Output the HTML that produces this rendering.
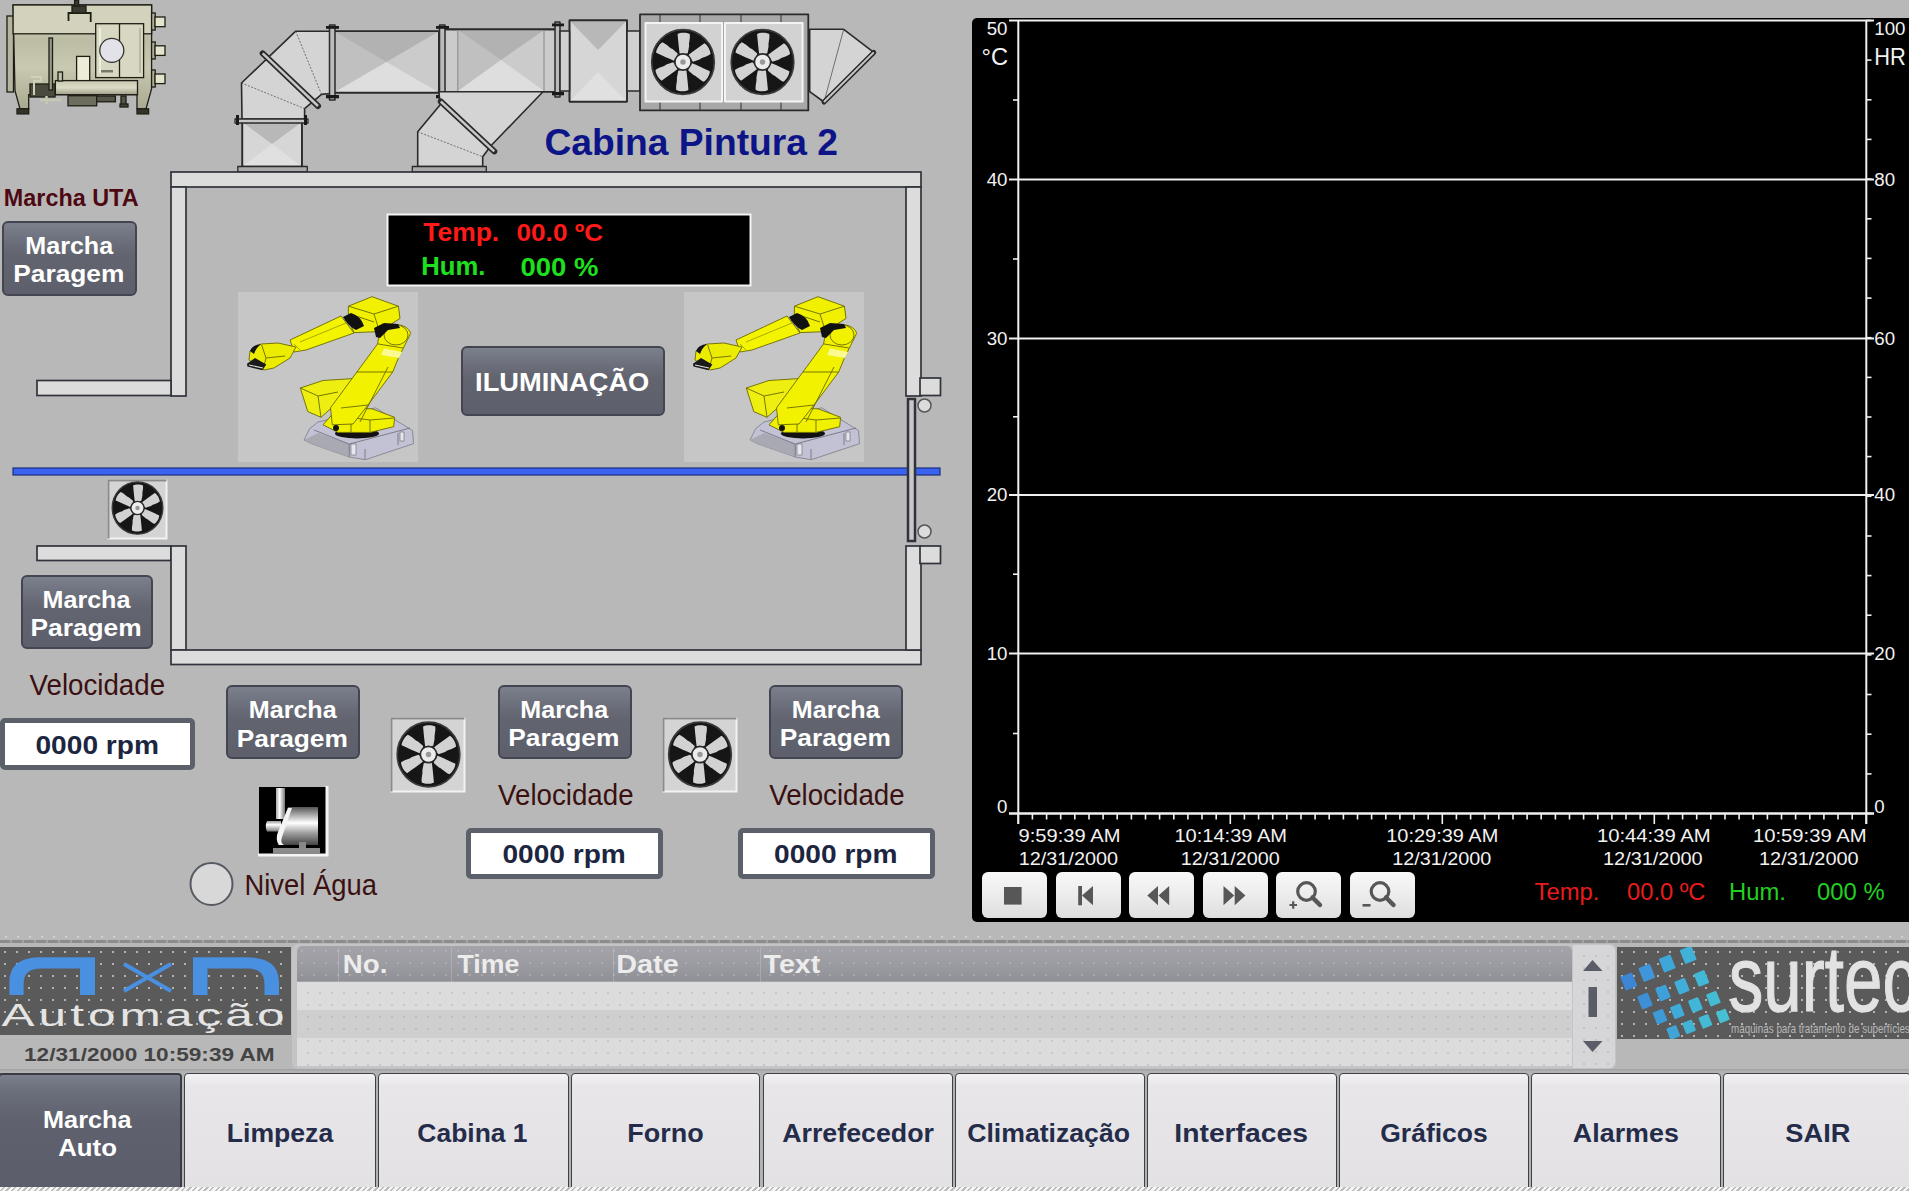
<!DOCTYPE html><html><head><meta charset="utf-8"><style>*{margin:0;padding:0;box-sizing:border-box}
html,body{width:1909px;height:1191px;overflow:hidden;background:#b8b8b8;font-family:"Liberation Sans",sans-serif}
.a{position:absolute}
.btn{position:absolute;border:2px solid #434651;border-radius:6px;background:linear-gradient(#7c7f8c 0%,#6e717e 22%,#62656f 45%,#5d606c 100%)}
.rpm{position:absolute;border:5px solid #5c606a;border-radius:5px;background:#fff}
.cbtn{position:absolute;top:872px;width:65px;height:46px;border-radius:6px;background:linear-gradient(#f8f8f8,#ececec 50%,#dedede)}
.nav{position:absolute;top:1072.5px;height:118px;border:1.5px solid #3f4147;border-radius:4px;background:linear-gradient(#f4f2f4 0%,#e8e6e8 10%,#e3e1e3 100%)}
.dots{background-image:radial-gradient(circle,rgba(210,210,210,.75) 0.7px,transparent 1.3px);background-size:12px 12px;background-position:-1px -1px}
.dotsl{background-image:radial-gradient(circle,rgba(160,160,165,.35) 0.7px,transparent 1.3px);background-size:12px 12px;background-position:5px 5px}
</style></head><body>
<!-- DUCTS + UTA -->
<svg class="a" style="left:0;top:0" width="900" height="180">
 <defs>
  <linearGradient id="xg1" x1="0" y1="0" x2="0" y2="1"><stop offset="0" stop-color="#bcbcbc"/><stop offset="1" stop-color="#d8d8d8"/></linearGradient>
 </defs>
 <g stroke="#2a2a2a" stroke-width="1.6" stroke-linejoin="round">
  <!-- left elbow -->
  <path d="M242 119 L241.5 83 L295.7 31.2 L330.4 31.2 L330.4 93.5 L321.5 94.4 L304.6 108.6 L304.6 119 Z" fill="#d4d4d4"/>
  <path d="M241.5 83 L304.6 108.6 M295.7 31.2 L321.5 94.4" stroke="#555" stroke-width="0.8" stroke-dasharray="2 1.5" fill="none"/>
  <!-- lower square duct -->
  <rect x="242.3" y="122" width="59.6" height="44.5" fill="#d6d6d6"/>
  <path d="M242.3 122 L272 144 L301.9 122 Z" fill="#b8b8b8" stroke="none"/>
  <path d="M242.3 166.5 L272 144 L301.9 166.5 Z" fill="#e0e0e0" stroke="none"/>
  <rect x="242.3" y="122" width="59.6" height="44.5" fill="none"/>
  <rect x="235" y="119" width="73" height="4" fill="#c8c8c8" stroke-width="1.3"/>
  <rect x="237.8" y="166.5" width="69.5" height="5.5" fill="#aaa" stroke-width="1.3"/>
  <!-- diagonal flange -->
  <path d="M262.7 53.4 L318 106" stroke="#2a2a2a" stroke-width="6" stroke-linecap="round"/>
  <path d="M262.7 53.4 L318 106" stroke="#c8c8c8" stroke-width="2.5"/>
  <!-- straight duct 1 -->
  <rect x="334" y="31.2" width="105" height="61.4" fill="#cbcbcb"/>
  <path d="M334 31.2 L386.5 62 L334 92.6 Z" fill="#c0c0c0" stroke="none"/>
  <path d="M334 31.2 L386.5 62 L439 31.2 Z" fill="#b2b2b2" stroke="none"/>
  <path d="M334 92.6 L386.5 62 L439 92.6 Z" fill="#dedede" stroke="none"/>
  <rect x="334" y="31.2" width="105" height="61.4" fill="none"/>
  <rect x="329.5" y="25" width="5.5" height="75" fill="#bbb" stroke-width="1.5"/>
  <!-- duct 2 -->
  <rect x="444" y="29.4" width="112.6" height="62.3" fill="#cbcbcb"/>
  <path d="M458 30 L501 60 L458 91 Z" fill="#c0c0c0" stroke="none"/>
  <path d="M458 30 L501 60 L544 30 Z" fill="#b2b2b2" stroke="none"/>
  <path d="M458 91 L501 60 L544 91 Z" fill="#dedede" stroke="none"/>
  <rect x="444" y="29.4" width="112.6" height="62.3" fill="none"/>
  <path d="M457.8 30 V91 M544 30 V91" stroke="#888" stroke-width="1" fill="none"/>
  <rect x="439.5" y="25" width="5.5" height="75" fill="#bbb" stroke-width="1.5"/>
  <rect x="555" y="22" width="5" height="75" fill="#bbb" stroke-width="1.5"/>
  <g fill="#1a1a1a" stroke="none">
   <rect x="326" y="26" width="13" height="2.8"/><rect x="326" y="95" width="13" height="3.3"/>
   <rect x="436" y="26" width="13" height="2.8"/><rect x="436" y="95" width="13" height="3.3"/>
   <rect x="552" y="23.5" width="12" height="2.8"/><rect x="552" y="92" width="12" height="3.3"/>
   <rect x="236" y="115" width="3" height="10"/><rect x="304" y="115" width="3" height="10"/>
  </g>
  <!-- right elbow (down) -->
  <path d="M439 91.7 L543 91.7 L490.7 146 L482.7 156.7 L482.7 166.5 L417.7 166.5 L417.7 131.8 L440 105 Z" fill="#d4d4d4"/>
  <path d="M417.7 131.8 L482.7 156.7" stroke="#555" stroke-width="0.8" stroke-dasharray="2 1.5" fill="none"/>
  <path d="M440.8 101.5 L494.3 151.4" stroke="#2a2a2a" stroke-width="6" stroke-linecap="round"/>
  <path d="M440.8 101.5 L494.3 151.4" stroke="#c8c8c8" stroke-width="2.5"/>
  <rect x="412.3" y="166.5" width="74" height="5.5" fill="#aaa" stroke-width="1.3"/>
  <!-- filter box -->
  <rect x="569.5" y="20.4" width="57.5" height="81.2" fill="#d6d6d6"/>
  <path d="M570 21 L598 50 L626.5 21 Z" fill="#b8b8b8" stroke="none"/>
  <path d="M570 101 L598 72 L626.5 101 Z" fill="#e0e0e0" stroke="none"/>
  <rect x="569.5" y="20.4" width="57.5" height="81.2" fill="none"/>
  <rect x="560" y="31" width="9.5" height="60" fill="#d0d0d0"/>
  <rect x="627" y="31" width="13" height="60" fill="#d0d0d0"/>
  <!-- fan box -->
  <rect x="640" y="14.4" width="168.3" height="96" fill="#a8a8a8" stroke-width="1.8"/>
  <path d="M660 14.4 V24 M700 14.4 V24 M741 14.4 V24 M781 14.4 V24 M660 101 V110.4 M700 101 V110.4 M741 101 V110.4 M781 101 V110.4" stroke="#333" stroke-width="1"/>
  <rect x="645.5" y="23" width="76.5" height="78.6" fill="#d2d2d2" stroke="#f4f4f4" stroke-width="2"/>
  <rect x="725" y="23" width="77.6" height="78.6" fill="#d2d2d2" stroke="#f4f4f4" stroke-width="2"/>
  <!-- exit duct -->
  <path d="M809.7 29.3 L843.7 29.3 L873.8 52.4 L824 102 L809.7 91.7 Z" fill="#d4d4d4"/>
  <path d="M843.7 29.3 L824 102" stroke="#555" stroke-width="0.8" fill="none"/>
  <path d="M873.8 52.4 L824 102" stroke="#2a2a2a" stroke-width="5" stroke-linecap="round"/>
  <path d="M873.8 52.4 L824 102" stroke="#c8c8c8" stroke-width="2"/>
 </g>
 <use href="#fan" x="649" y="27.5" width="68" height="69"/>
 <use href="#fan" x="728.5" y="27.5" width="68" height="69"/>

 <!-- UTA machine -->
 <defs>
  <linearGradient id="utab" x1="0" y1="0" x2="0" y2="1"><stop offset="0" stop-color="#cfcfb8"/><stop offset=".35" stop-color="#bdbda6"/><stop offset=".6" stop-color="#c9c9b2"/><stop offset="1" stop-color="#a9a992"/></linearGradient>
  <linearGradient id="utat" x1="0" y1="0" x2="0" y2="1"><stop offset="0" stop-color="#c8c8b0"/><stop offset=".5" stop-color="#dcdcc6"/><stop offset="1" stop-color="#9e9e88"/></linearGradient>
 </defs>
 <g stroke="#1e1e14" stroke-width="1.3">
  <rect x="7" y="16" width="6.5" height="76" fill="#b4b4a0"/>
  <path d="M13.1 5 H151.6 V88.7 L146 108.8 H137 V94.7 H28.7 V108.8 H20 L15 90.7 Z" fill="url(#utab)"/>
  <rect x="13.1" y="5" width="138.5" height="28.8" fill="#d3d3bd"/>
  <rect x="95.7" y="23.7" width="47.9" height="53.9" fill="#d8d8c2"/>
  <path d="M119.5 24 V77.6" fill="none"/>
  <path d="M100 28 V73" stroke="#f4f4e4" stroke-width="1.6" fill="none"/>
  <path d="M140 28 V73" stroke="#9a9a86" stroke-width="1" fill="none"/>
  <rect x="101" y="70" width="12" height="2.5" fill="#77776a" stroke="none"/>
  <circle cx="111.8" cy="50.4" r="12" fill="#e2e2e8" stroke="#333"/>
  <rect x="76.6" y="56.4" width="13.1" height="25.2" fill="#ececd8"/>
  <rect x="55.4" y="80.6" width="82.1" height="14.1" fill="url(#utat)"/>
  <rect x="68" y="95.7" width="28.7" height="10.1" fill="#6e6e5e"/>
  <rect x="96.7" y="96" width="18.7" height="5.8" fill="#55554a"/>
  <rect x="30" y="84" width="25" height="13" fill="#4a4a3e"/>
  <path d="M31 77 H41 V81 H34 V95" stroke="#d0d0ba" stroke-width="2" fill="none"/>
  <path d="M40 100 H61 M46.5 96 V104" stroke="#c8c8b2" stroke-width="2.5" fill="none"/>
  <rect x="58" y="72" width="4.5" height="9" fill="#c4c4ae"/>
  <rect x="121" y="96" width="5" height="9" fill="#55554a"/>
  <rect x="120" y="104" width="8" height="3" fill="#44443a"/>
  <rect x="17" y="108.8" width="11.7" height="5.1" fill="#33332a"/>
  <rect x="137" y="108.8" width="11.6" height="5.1" fill="#33332a"/>
  <rect x="49" y="38" width="3.5" height="52" fill="#9a9a88"/>
  <path d="M68.5 21 V13 H90.7 V22" fill="none" stroke-width="1.8"/>
  <rect x="72" y="6" width="14" height="7" fill="#3a3a30"/>
  <rect x="74.6" y="0" width="4" height="6" fill="#3a3a30"/>
  <rect x="151.6" y="13" width="3.6" height="17" fill="#b0b09a"/>
  <rect x="155" y="17" width="10" height="9.7" fill="#e4e4cc"/>
  <rect x="151.6" y="42" width="3.6" height="17" fill="#b0b09a"/>
  <rect x="155" y="45.8" width="10" height="9.6" fill="#e4e4cc"/>
  <rect x="151.6" y="70" width="3.6" height="17" fill="#b0b09a"/>
  <rect x="155" y="74" width="10" height="9.6" fill="#e4e4cc"/>
 </g>
</svg>

<!-- LEFT SCENE -->
<svg class="a" style="left:0;top:0" width="970" height="940" font-family="Liberation Sans">
 <defs>
  <symbol id="fan" viewBox="0 0 100 100">
   <ellipse cx="50" cy="50" rx="46" ry="47.5" fill="#161616" stroke="#3a3a3a" stroke-width="2.5"/>
   <g fill="#d2d2d2">
    <path id="bl" d="M42 9 C46 6.5 55 6.5 60 9 C61 16 58 22 59 27 L57 37 C53 38.5 48 38.5 45 37.5 C44 30 43 20 42 9 Z"/>
    <use href="#bl" transform="rotate(60 50 50)"/>
    <use href="#bl" transform="rotate(120 50 50)"/>
    <use href="#bl" transform="rotate(180 50 50)"/>
    <use href="#bl" transform="rotate(240 50 50)"/>
    <use href="#bl" transform="rotate(300 50 50)"/>
   </g>
   <circle cx="50" cy="50" r="12" fill="#ececec" stroke="#2a2a2a" stroke-width="2.5"/>
   <circle cx="50" cy="50" r="4" fill="#999"/>
  </symbol>
  <linearGradient id="duct" x1="0" y1="0" x2="0" y2="1"><stop offset="0" stop-color="#d0d0d0"/><stop offset="1" stop-color="#d8d8d8"/></linearGradient>
 </defs>

 <!-- blue line -->
 <rect x="13" y="468" width="927" height="7" fill="#3a64f0" stroke="#1c2c80" stroke-width="1.2"/>
 <!-- frame -->
 <g fill="#dcdcdc" stroke="#30333b" stroke-width="1.7">
  <rect x="171" y="172" width="750" height="15"/>
  <rect x="171" y="187" width="15" height="209"/>
  <rect x="37" y="380.5" width="134" height="15"/>
  <rect x="906" y="187" width="15" height="209"/>
  <rect x="37" y="546" width="134" height="14.5"/>
  <rect x="171" y="546" width="15" height="104"/>
  <rect x="171" y="650" width="750" height="14.5"/>
  <rect x="906" y="546" width="15" height="104"/>
  <rect x="920" y="378" width="20.5" height="17.5"/>
  <rect x="920" y="546" width="20.5" height="17.5"/>
  <rect x="908" y="399" width="7" height="142" stroke-width="2.5" fill="#c8c8c8"/>
  <circle cx="924.5" cy="405.5" r="6.5" stroke="#555" stroke-width="1.5"/>
  <circle cx="924.5" cy="531.5" r="6.5" stroke="#555" stroke-width="1.5"/>
 </g>

 <!-- Temp hum box -->
 <rect x="387.5" y="214.5" width="363" height="71" fill="#000" stroke="#f4f4f4" stroke-width="2"/>

 <!-- Titles -->
 <circle cx="211.5" cy="884" r="21" fill="#d8d8d8" stroke="#555a62" stroke-width="2"/>

 <!-- small fans -->
 <g>
  <rect x="108.5" y="480.5" width="58" height="58" fill="#d4d4d4" stroke="#f2f2f2" stroke-width="2"/>
  <path d="M108.5 538.5 V480.5 H166.5" fill="none" stroke="#8a8a8a" stroke-width="2"/>
  <use href="#fan" x="110" y="480" width="55" height="56"/>
 </g>
 <g>
  <rect x="391.5" y="718.5" width="73" height="73" fill="#d4d4d4" stroke="#f2f2f2" stroke-width="2"/>
  <path d="M391.5 791.5 V718.5 H464.5" fill="none" stroke="#8a8a8a" stroke-width="2"/>
  <use href="#fan" x="394.5" y="719.5" width="68" height="70"/>
 </g>
 <g>
  <rect x="663.5" y="718.5" width="73" height="73" fill="#d4d4d4" stroke="#f2f2f2" stroke-width="2"/>
  <path d="M663.5 791.5 V718.5 H736.5" fill="none" stroke="#8a8a8a" stroke-width="2"/>
  <use href="#fan" x="666" y="719.5" width="68" height="70"/>
 </g>

 <!-- motor -->
 <g transform="translate(259,787)">
  <rect x="0" y="0" width="67" height="67" fill="#000"/>
  <path d="M-1 68 H68 V-1" fill="none" stroke="#f4f4f4" stroke-width="3"/>
  <defs>
   <linearGradient id="mg" x1="0" y1="0" x2="0" y2="1"><stop offset="0" stop-color="#555"/><stop offset=".25" stop-color="#bbb"/><stop offset=".42" stop-color="#fff"/><stop offset=".7" stop-color="#999"/><stop offset="1" stop-color="#444"/></linearGradient>
   <linearGradient id="sg" x1="0" y1="0" x2="1" y2="0"><stop offset="0" stop-color="#aaa"/><stop offset=".4" stop-color="#fff"/><stop offset="1" stop-color="#777"/></linearGradient>
  </defs>
  <rect x="17" y="1" width="9" height="31" fill="url(#sg)"/>
  <linearGradient id="stg" x1="0" y1="0" x2="0" y2="1"><stop offset="0" stop-color="#999"/><stop offset=".35" stop-color="#fff"/><stop offset="1" stop-color="#777"/></linearGradient><path d="M8 34 H22 V44.6 H8 Q5.5 39.3 8 34 Z" fill="url(#stg)"/>
  <path d="M29 20 H59 V58 H29 L19 58 Q17 50 21 44 Z" fill="url(#mg)"/><path d="M29 21 L33 21 L23 50 Q21 56 25 58 L20 58 Q16 52 19 45 Z" fill="#f4f4f4"/>
  <rect x="40" y="55" width="7" height="7" fill="#888"/>
  <rect x="14" y="61" width="47" height="6" fill="#8a8a8a"/>
 </g>
</svg>


<div class="btn" style="left:2px;top:221px;width:135px;height:74.5px"></div>
<div class="btn" style="left:20.5px;top:575px;width:132.5px;height:74px"></div>
<div class="btn" style="left:226px;top:685.4px;width:134px;height:73.5px"></div>
<div class="btn" style="left:497.5px;top:685px;width:134px;height:74px"></div>
<div class="btn" style="left:769px;top:685px;width:134px;height:74px"></div>
<div class="btn" style="left:461.3px;top:345.5px;width:203.3px;height:70.4px"></div>
<div class="rpm" style="left:0px;top:717.8px;width:195px;height:52.2px"></div>
<div class="rpm" style="left:465.8px;top:827.6px;width:197.2px;height:51.1px"></div>
<div class="rpm" style="left:737.6px;top:827.6px;width:197px;height:51.1px"></div>
<!-- ROBOTS -->
<svg width="0" height="0" style="position:absolute">
 <defs>
  <symbol id="robot" viewBox="0 0 180 170">
   <rect x="0" y="0" width="180" height="170" fill="#c6c6c6"/>
   <!-- base -->
   <path d="M66 148 L71.7 136.6 L80 130 L137.7 115.8 L174.5 138.5 L175.5 151.7 L127.4 167.7 L111.3 165 L73.6 151.7 Z" fill="#c2c2d4" stroke="#7a7a88" stroke-width="0.8"/>
   <path d="M66 148 L73.6 151.7 L111.3 165 L111.3 152 L80 141 Z" fill="#a9a9b4" stroke="none"/>
   <path d="M111.3 152 L172 136 M111.3 152 V165 M127 157 V167 M160 141 V153 M76 138 L111 152" stroke="#6a6a78" stroke-width="0.8" fill="none"/>
   <rect x="113" y="152" width="5" height="11" fill="#e6e6f0" stroke="#666" stroke-width=".6"/>
   <rect x="162" y="140" width="4" height="9" fill="#e6e6f0" stroke="#666" stroke-width=".6"/>
   <ellipse cx="119" cy="141.5" rx="22" ry="5" fill="#111"/>
   <g stroke="#6a6a00" stroke-width="0.9" stroke-linejoin="round">
    <!-- counterweight box -->
    <path d="M62.3 96 L85 88.5 L115 86.6 L100 110 L83 125.3 L69.8 119.6 Z" fill="#eeee10"/>
    <path d="M62.3 96 L80 104 L100 100 M80 104 L83 125.3" fill="none"/>
    <!-- turret -->
    <path d="M85 132.8 L100 116 L134 116.8 L156.6 125.3 L155.7 134.7 L132 140.4 L100 140.4 Z" fill="#f0f000"/>
    <path d="M100 124 L132 128 L156 126 M113 128 V140 M132 128 V140" fill="none"/>
    <!-- upper arm -->
    <path d="M94.3 132.8 L92.5 115.8 L118.9 80 L139.6 51.9 L142 38 C146 30 170 30 172.6 41.5 L160.4 66 L154.7 80 L130 113 L115 132 Z" fill="#f2f200"/>
    <path d="M118.9 80 L154.7 80 M139.6 51.9 L165 56 M130 113 L103 116 M122 130 L150 75" fill="none"/>
    <path d="M146 56.6 L164 60 L161 66 L143 63 Z" fill="#fafa90" stroke="none"/>
    <ellipse cx="158" cy="43" rx="12" ry="10" fill="none"/>
    <!-- top box -->
    <path d="M110.4 14.2 L134 4.7 L160.4 14.2 L162 26.4 L141.5 39.6 L116 40.6 L110.4 28.3 Z" fill="#f0f000"/>
    <path d="M110.4 14.2 L136 22 L160.4 14.2 M136 22 L141.5 39.6 M118 24 L136 30" fill="none"/>
    <path d="M136 36 L146 31 L160 32 L162 36 L150 38 L142 46 L138 45 Z" fill="#111" stroke="none"/>
    <!-- forearm -->
    <path d="M52 48 L103 24 L116 41 L68 58 L56 60 Z" fill="#f4f400"/>
    <path d="M62 50 L108 31 M56 52 L62 58" fill="none" stroke="#a0a000"/>
    <path d="M105 25 L113 21 Q123 24 126 34 L118 38 Q110 34 105 25 Z" fill="#111" stroke="none"/>
    <!-- wrist -->
    <path d="M12 59 L23 52 L40 51 L58 55 L52 66 L36 76 L26 78 L11 68 Z" fill="#ecec00"/>
    <path d="M23.6 52.8 L28 66 L47.2 64 M28 66 L25.5 75.5" fill="none"/>
    <path d="M12 59 Q14 53 23 52 Q18 56 16 62 Z" fill="#151515" stroke="none"/>
    <!-- tool -->
    <path d="M9 71.7 L17 66 L28.3 72.6 L24.5 78.3 L9.4 74.5 Z" fill="#1a1a1a" stroke="none"/>
    <path d="M11 73 L25 76" stroke="#dddddd" stroke-width="1.2"/>
    <circle cx="98" cy="136" r="3" fill="#111" stroke="none"/>
   </g>
  </symbol>
 </defs>
</svg>
<svg class="a" style="left:238px;top:292px" width="180" height="170"><use href="#robot" width="180" height="170"/></svg>
<svg class="a" style="left:684px;top:292px" width="180" height="170"><use href="#robot" width="180" height="170"/></svg>
<div class="a" style="left:972px;top:18px;width:937px;height:904px;background:#000;border-radius:5px 0 0 5px"></div>
<div class="cbtn" style="left:982px"></div>
<div class="cbtn" style="left:1055.5px"></div>
<div class="cbtn" style="left:1129px"></div>
<div class="cbtn" style="left:1202.6px"></div>
<div class="cbtn" style="left:1276px"></div>
<div class="cbtn" style="left:1350px"></div>
<svg class="a" style="left:0;top:0" width="1909" height="930">
<g stroke="#f0f0f0" fill="none">
<line x1="1009" y1="20.5" x2="1874" y2="20.5" stroke-width="2"/>
<line x1="1009" y1="179.5" x2="1874" y2="179.5" stroke-width="2"/>
<line x1="1009" y1="338.5" x2="1874" y2="338.5" stroke-width="2"/>
<line x1="1009" y1="495" x2="1874" y2="495" stroke-width="2"/>
<line x1="1009" y1="653.5" x2="1874" y2="653.5" stroke-width="2"/>
<line x1="1009" y1="813.5" x2="1874" y2="813.5" stroke-width="2.6"/>
<line x1="1018.3" y1="20" x2="1018.3" y2="824" stroke-width="2"/>
<line x1="1866.3" y1="20" x2="1866.3" y2="824" stroke-width="2"/>
<line x1="1013" y1="100.0" x2="1018" y2="100.0" stroke-width="1.6"/>
<line x1="1013" y1="259.0" x2="1018" y2="259.0" stroke-width="1.6"/>
<line x1="1013" y1="416.8" x2="1018" y2="416.8" stroke-width="1.6"/>
<line x1="1013" y1="574.2" x2="1018" y2="574.2" stroke-width="1.6"/>
<line x1="1013" y1="733.5" x2="1018" y2="733.5" stroke-width="1.6"/>
<line x1="1866" y1="20.5" x2="1871.5" y2="20.5" stroke-width="1.6"/>
<line x1="1866" y1="60.1" x2="1871.5" y2="60.1" stroke-width="1.6"/>
<line x1="1866" y1="99.8" x2="1871.5" y2="99.8" stroke-width="1.6"/>
<line x1="1866" y1="139.4" x2="1871.5" y2="139.4" stroke-width="1.6"/>
<line x1="1866" y1="179.1" x2="1871.5" y2="179.1" stroke-width="1.6"/>
<line x1="1866" y1="218.8" x2="1871.5" y2="218.8" stroke-width="1.6"/>
<line x1="1866" y1="258.4" x2="1871.5" y2="258.4" stroke-width="1.6"/>
<line x1="1866" y1="298.1" x2="1871.5" y2="298.1" stroke-width="1.6"/>
<line x1="1866" y1="337.7" x2="1871.5" y2="337.7" stroke-width="1.6"/>
<line x1="1866" y1="377.4" x2="1871.5" y2="377.4" stroke-width="1.6"/>
<line x1="1866" y1="417.0" x2="1871.5" y2="417.0" stroke-width="1.6"/>
<line x1="1866" y1="456.6" x2="1871.5" y2="456.6" stroke-width="1.6"/>
<line x1="1866" y1="496.3" x2="1871.5" y2="496.3" stroke-width="1.6"/>
<line x1="1866" y1="536.0" x2="1871.5" y2="536.0" stroke-width="1.6"/>
<line x1="1866" y1="575.6" x2="1871.5" y2="575.6" stroke-width="1.6"/>
<line x1="1866" y1="615.2" x2="1871.5" y2="615.2" stroke-width="1.6"/>
<line x1="1866" y1="654.9" x2="1871.5" y2="654.9" stroke-width="1.6"/>
<line x1="1866" y1="694.5" x2="1871.5" y2="694.5" stroke-width="1.6"/>
<line x1="1866" y1="734.2" x2="1871.5" y2="734.2" stroke-width="1.6"/>
<line x1="1866" y1="773.9" x2="1871.5" y2="773.9" stroke-width="1.6"/>
<line x1="1866" y1="813.5" x2="1871.5" y2="813.5" stroke-width="1.6"/>
<line x1="1018.3" y1="813" x2="1018.3" y2="824" stroke-width="1.6"/>
<line x1="1032.4" y1="813" x2="1032.4" y2="819.5" stroke-width="1.6"/>
<line x1="1046.6" y1="813" x2="1046.6" y2="819.5" stroke-width="1.6"/>
<line x1="1060.7" y1="813" x2="1060.7" y2="819.5" stroke-width="1.6"/>
<line x1="1074.8" y1="813" x2="1074.8" y2="819.5" stroke-width="1.6"/>
<line x1="1089.0" y1="813" x2="1089.0" y2="819.5" stroke-width="1.6"/>
<line x1="1103.1" y1="813" x2="1103.1" y2="819.5" stroke-width="1.6"/>
<line x1="1117.2" y1="813" x2="1117.2" y2="819.5" stroke-width="1.6"/>
<line x1="1131.4" y1="813" x2="1131.4" y2="819.5" stroke-width="1.6"/>
<line x1="1145.5" y1="813" x2="1145.5" y2="819.5" stroke-width="1.6"/>
<line x1="1159.6" y1="813" x2="1159.6" y2="819.5" stroke-width="1.6"/>
<line x1="1173.8" y1="813" x2="1173.8" y2="819.5" stroke-width="1.6"/>
<line x1="1187.9" y1="813" x2="1187.9" y2="819.5" stroke-width="1.6"/>
<line x1="1202.0" y1="813" x2="1202.0" y2="819.5" stroke-width="1.6"/>
<line x1="1216.2" y1="813" x2="1216.2" y2="819.5" stroke-width="1.6"/>
<line x1="1230.3" y1="813" x2="1230.3" y2="824" stroke-width="1.6"/>
<line x1="1244.4" y1="813" x2="1244.4" y2="819.5" stroke-width="1.6"/>
<line x1="1258.6" y1="813" x2="1258.6" y2="819.5" stroke-width="1.6"/>
<line x1="1272.7" y1="813" x2="1272.7" y2="819.5" stroke-width="1.6"/>
<line x1="1286.8" y1="813" x2="1286.8" y2="819.5" stroke-width="1.6"/>
<line x1="1301.0" y1="813" x2="1301.0" y2="819.5" stroke-width="1.6"/>
<line x1="1315.1" y1="813" x2="1315.1" y2="819.5" stroke-width="1.6"/>
<line x1="1329.2" y1="813" x2="1329.2" y2="819.5" stroke-width="1.6"/>
<line x1="1343.4" y1="813" x2="1343.4" y2="819.5" stroke-width="1.6"/>
<line x1="1357.5" y1="813" x2="1357.5" y2="819.5" stroke-width="1.6"/>
<line x1="1371.6" y1="813" x2="1371.6" y2="819.5" stroke-width="1.6"/>
<line x1="1385.8" y1="813" x2="1385.8" y2="819.5" stroke-width="1.6"/>
<line x1="1399.9" y1="813" x2="1399.9" y2="819.5" stroke-width="1.6"/>
<line x1="1414.0" y1="813" x2="1414.0" y2="819.5" stroke-width="1.6"/>
<line x1="1428.2" y1="813" x2="1428.2" y2="819.5" stroke-width="1.6"/>
<line x1="1442.3" y1="813" x2="1442.3" y2="824" stroke-width="1.6"/>
<line x1="1456.4" y1="813" x2="1456.4" y2="819.5" stroke-width="1.6"/>
<line x1="1470.6" y1="813" x2="1470.6" y2="819.5" stroke-width="1.6"/>
<line x1="1484.7" y1="813" x2="1484.7" y2="819.5" stroke-width="1.6"/>
<line x1="1498.8" y1="813" x2="1498.8" y2="819.5" stroke-width="1.6"/>
<line x1="1513.0" y1="813" x2="1513.0" y2="819.5" stroke-width="1.6"/>
<line x1="1527.1" y1="813" x2="1527.1" y2="819.5" stroke-width="1.6"/>
<line x1="1541.2" y1="813" x2="1541.2" y2="819.5" stroke-width="1.6"/>
<line x1="1555.4" y1="813" x2="1555.4" y2="819.5" stroke-width="1.6"/>
<line x1="1569.5" y1="813" x2="1569.5" y2="819.5" stroke-width="1.6"/>
<line x1="1583.6" y1="813" x2="1583.6" y2="819.5" stroke-width="1.6"/>
<line x1="1597.8" y1="813" x2="1597.8" y2="819.5" stroke-width="1.6"/>
<line x1="1611.9" y1="813" x2="1611.9" y2="819.5" stroke-width="1.6"/>
<line x1="1626.0" y1="813" x2="1626.0" y2="819.5" stroke-width="1.6"/>
<line x1="1640.2" y1="813" x2="1640.2" y2="819.5" stroke-width="1.6"/>
<line x1="1654.3" y1="813" x2="1654.3" y2="824" stroke-width="1.6"/>
<line x1="1668.4" y1="813" x2="1668.4" y2="819.5" stroke-width="1.6"/>
<line x1="1682.6" y1="813" x2="1682.6" y2="819.5" stroke-width="1.6"/>
<line x1="1696.7" y1="813" x2="1696.7" y2="819.5" stroke-width="1.6"/>
<line x1="1710.8" y1="813" x2="1710.8" y2="819.5" stroke-width="1.6"/>
<line x1="1725.0" y1="813" x2="1725.0" y2="819.5" stroke-width="1.6"/>
<line x1="1739.1" y1="813" x2="1739.1" y2="819.5" stroke-width="1.6"/>
<line x1="1753.2" y1="813" x2="1753.2" y2="819.5" stroke-width="1.6"/>
<line x1="1767.4" y1="813" x2="1767.4" y2="819.5" stroke-width="1.6"/>
<line x1="1781.5" y1="813" x2="1781.5" y2="819.5" stroke-width="1.6"/>
<line x1="1795.6" y1="813" x2="1795.6" y2="819.5" stroke-width="1.6"/>
<line x1="1809.8" y1="813" x2="1809.8" y2="819.5" stroke-width="1.6"/>
<line x1="1823.9" y1="813" x2="1823.9" y2="819.5" stroke-width="1.6"/>
<line x1="1838.0" y1="813" x2="1838.0" y2="819.5" stroke-width="1.6"/>
<line x1="1852.2" y1="813" x2="1852.2" y2="819.5" stroke-width="1.6"/>
<line x1="1866.3" y1="813" x2="1866.3" y2="824" stroke-width="1.6"/>
</g>
<g fill="#575757">
<rect x="1004" y="887" width="17.6" height="17.6"/>
<rect x="1078.2" y="886" width="3.8" height="19.3"/><path d="M1082 895.6 L1093 886 V905.3 Z"/>
<path d="M1147.3 895.6 L1158 886 V905.3 Z M1158.5 895.6 L1169.2 886 V905.3 Z"/>
<path d="M1245.4 895.6 L1234.7 886 V905.3 Z M1234.2 895.6 L1223.5 886 V905.3 Z"/>
</g>
<g stroke="#575757" fill="none">
<circle cx="1306.5" cy="891.5" r="8.8" stroke-width="3.2"/><path d="M1312.5 897.5 L1320 905" stroke-width="4.5" stroke-linecap="round"/><path d="M1289.5 905 H1297 M1293.2 901.3 V908.7" stroke-width="2.2"/>
<circle cx="1380" cy="891.5" r="8.8" stroke-width="3.2"/><path d="M1386 897.5 L1393.5 905" stroke-width="4.5" stroke-linecap="round"/><path d="M1362.5 905.3 H1370.5" stroke-width="2.6"/>
</g>
</svg>
<div class="a" style="left:0;top:935px;width:1909px;height:4px;background-image:radial-gradient(circle,rgba(225,225,225,.6) 0.8px,transparent 1.3px);background-size:12px 4px"></div>
<div class="a" style="left:0;top:940.3px;width:1909px;height:2.6px;background:repeating-linear-gradient(90deg,#8c8c8e 0 10px,#a4a4a6 10px 12px)"></div>
<div class="a dots" style="left:0;top:947px;width:291px;height:88px;background-color:#5a5a5a"></div>
<div class="a" style="left:292px;top:944px;width:1324px;height:125px;background:#c4c4c6;border-radius:6px"></div>
<div class="a dots" style="left:297px;top:946px;width:1275px;height:36px;background-color:#9b9ba2;border-radius:5px 5px 0 0;background-image:radial-gradient(circle,rgba(185,185,190,.55) 0.7px,transparent 1.3px),linear-gradient(#a4a4aa,#9a9aa1 60%,#8f8f96);background-size:12px 12px,100% 100%"></div>
<div class="a dotsl" style="left:297px;top:982px;width:1275px;height:84px;background-color:#dcdcdc"></div>
<div class="a" style="left:297px;top:1010px;width:1275px;height:28px;background:rgba(0,0,0,.055)"></div>
<div class="a" style="left:338.2px;top:947px;width:1px;height:35px;background:rgba(255,255,255,.18)"></div>
<div class="a" style="left:451.3px;top:947px;width:1px;height:35px;background:rgba(255,255,255,.18)"></div>
<div class="a" style="left:612.6px;top:947px;width:1px;height:35px;background:rgba(255,255,255,.18)"></div>
<div class="a" style="left:759.7px;top:947px;width:1px;height:35px;background:rgba(255,255,255,.18)"></div>
<div class="a dotsl" style="left:1573px;top:945px;width:42px;height:123px;background-color:#d6d6d8;border-radius:0 6px 6px 0"></div>
<div class="a dots" style="left:1617px;top:947px;width:292px;height:92px;background-color:#5a5a5a"></div>
<!-- LOGOS -->
<svg class="a" style="left:0;top:947px" width="291" height="88">
 <g fill="#4a90e0">
  <path d="M9.4 48 V36 C9.4 18 20 10.3 42 10.3 H95 V48 H80 V21.5 H42 C28 21.5 23.6 27 23.6 38 V48 Z"/>
  <path d="M279 48 V36 C279 18 268 10.3 246 10.3 H193 V48 H207.5 V21.5 H246 C260 21.5 264.5 27 264.5 38 V48 Z"/>
 </g>
 <path d="M124 17 L171 44 M124 44 L171 17" stroke="#4a90e0" stroke-width="4"/>
</svg>
<svg class="a" style="left:1617px;top:947px" width="292" height="92">
 <g>
<rect x="5.6" y="27.0" width="12.5" height="15" rx="1.2" fill="#3d86d6" transform="rotate(-22 11.8 34.5)"/>
<rect x="23.6" y="18.4" width="12.5" height="15" rx="1.2" fill="#3f95d8" transform="rotate(-22 29.8 25.9)"/>
<rect x="44.0" y="9.0" width="12.5" height="15" rx="1.2" fill="#3ea6d8" transform="rotate(-22 50.2 16.5)"/>
<rect x="65.0" y="0.4" width="12.5" height="15" rx="1.2" fill="#40b2d8" transform="rotate(-22 71.3 7.9)"/>
<rect x="22.2" y="47.0" width="11.5" height="14" rx="1.2" fill="#3e90d6" transform="rotate(-22 28.0 54.0)"/>
<rect x="40.2" y="39.0" width="11.5" height="14" rx="1.2" fill="#3ea0d8" transform="rotate(-22 46.0 46.0)"/>
<rect x="59.2" y="32.2" width="11.5" height="14" rx="1.2" fill="#40aed8" transform="rotate(-22 65.0 39.2)"/>
<rect x="78.8" y="24.4" width="11.5" height="14" rx="1.2" fill="#42b8d6" transform="rotate(-22 84.6 31.4)"/>
<rect x="37.5" y="63.2" width="11" height="13" rx="1.2" fill="#3e9ad6" transform="rotate(-22 43.0 69.7)"/>
<rect x="54.8" y="57.8" width="11" height="13" rx="1.2" fill="#40aad8" transform="rotate(-22 60.3 64.3)"/>
<rect x="72.9" y="51.5" width="11" height="13" rx="1.2" fill="#42b6d6" transform="rotate(-22 78.4 58.0)"/>
<rect x="90.9" y="45.2" width="11" height="13" rx="1.2" fill="#44bcd4" transform="rotate(-22 96.4 51.7)"/>
<rect x="51.1" y="79.4" width="10.5" height="12" rx="1.2" fill="#40a4d6" transform="rotate(-22 56.4 85.4)"/>
<rect x="66.8" y="73.9" width="10.5" height="12" rx="1.2" fill="#42b2d6" transform="rotate(-22 72.0 79.9)"/>
<rect x="83.2" y="68.4" width="10.5" height="12" rx="1.2" fill="#44bad4" transform="rotate(-22 88.5 74.4)"/>
<rect x="100.5" y="63.0" width="10.5" height="12" rx="1.2" fill="#46c0d2" transform="rotate(-22 105.8 69.0)"/>
</g>
 <text x="0" y="0" fill="#e2e2e2" stroke="#e2e2e2" stroke-width="1.2" font-family="Liberation Sans" font-size="93.4" transform="translate(111.8,63.8) scale(0.74,1)">surtec</text>
 <text x="0" y="0" fill="#b8b8b8" font-family="Liberation Sans" font-size="12" transform="translate(114,86) scale(0.82,1)">máquinas para tratamento de superfícies</text>
</svg>
<svg class="a" style="left:1580px;top:955px" width="30" height="105">
 <path d="M3 16 L12.5 5 L22.5 16 Z" fill="#5a5c68"/>
 <rect x="8.5" y="32" width="8.5" height="30" fill="#5a5c68"/>
 <path d="M3 86 L12.5 97 L22.5 86 Z" fill="#5a5c68"/>
</svg>

<div class="a" style="left:0;top:1069px;width:1909px;height:122px;background:linear-gradient(#a0a0a2,#b4b4b6 3px,#b0b2b4 6px,#b0b2b4)"></div>
<div class="nav" style="left:-2.0px;width:184.4px;border-color:#3a3c44;border-width:2px;background:linear-gradient(#7c7f8c 0%,#6b6e7b 14%,#5f626e 40%,#5b5e6a 100%)"></div>
<div class="nav" style="left:184.4px;width:191.20000000000002px"></div>
<div class="nav" style="left:377.6px;width:191.0px"></div>
<div class="nav" style="left:570.6px;width:189.89999999999998px"></div>
<div class="nav" style="left:762.5px;width:190.0px"></div>
<div class="nav" style="left:954.5px;width:190.0px"></div>
<div class="nav" style="left:1146.5px;width:190.0px"></div>
<div class="nav" style="left:1338.5px;width:190.5px"></div>
<div class="nav" style="left:1531.0px;width:189.5999999999999px"></div>
<div class="nav" style="left:1722.6px;width:188.4000000000001px"></div>
<div class="a" style="left:0;top:1186.5px;width:1909px;height:4.5px;background:repeating-linear-gradient(135deg,#f6f6f6 0 2.2px,#bcbcbc 2.2px 4px)"></div>
<svg class="a" style="left:0;top:0" width="1909" height="1191" font-family="Liberation Sans">
<text transform="translate(3.86,205.70) scale(0.999,1)" font-size="23.42" font-weight="bold" fill="#4e0812">Marcha UTA</text>
<text transform="translate(544.41,155.20) scale(1.014,1)" font-size="36.71" font-weight="bold" fill="#0c1488">Cabina Pintura 2</text>
<text transform="translate(423.34,240.50) scale(1.025,1)" font-size="25.80" font-weight="bold" fill="#ff1a1a">Temp.</text>
<text transform="translate(516.55,240.50) scale(1.096,1)" font-size="23.86" font-weight="bold" fill="#ff1a1a">00.0 ºC</text>
<text transform="translate(421.20,275.10) scale(0.995,1)" font-size="25.80" font-weight="bold" fill="#1ee01e">Hum.</text>
<text transform="translate(520.50,276.00) scale(1.104,1)" font-size="24.86" font-weight="bold" fill="#1ee01e">000 %</text>
<text transform="translate(69.20,253.90) scale(1.025,1)" text-anchor="middle" font-size="24.50" font-weight="bold" fill="#ffffff">Marcha</text>
<text transform="translate(68.80,282.10) scale(1.075,1)" text-anchor="middle" font-size="24.50" font-weight="bold" fill="#ffffff">Paragem</text>
<text transform="translate(86.45,607.90) scale(1.025,1)" text-anchor="middle" font-size="24.50" font-weight="bold" fill="#ffffff">Marcha</text>
<text transform="translate(86.05,636.10) scale(1.075,1)" text-anchor="middle" font-size="24.50" font-weight="bold" fill="#ffffff">Paragem</text>
<text transform="translate(292.70,718.30) scale(1.025,1)" text-anchor="middle" font-size="24.50" font-weight="bold" fill="#ffffff">Marcha</text>
<text transform="translate(292.30,746.50) scale(1.075,1)" text-anchor="middle" font-size="24.50" font-weight="bold" fill="#ffffff">Paragem</text>
<text transform="translate(564.20,717.90) scale(1.025,1)" text-anchor="middle" font-size="24.50" font-weight="bold" fill="#ffffff">Marcha</text>
<text transform="translate(563.80,746.10) scale(1.075,1)" text-anchor="middle" font-size="24.50" font-weight="bold" fill="#ffffff">Paragem</text>
<text transform="translate(835.70,717.90) scale(1.025,1)" text-anchor="middle" font-size="24.50" font-weight="bold" fill="#ffffff">Marcha</text>
<text transform="translate(835.30,746.10) scale(1.075,1)" text-anchor="middle" font-size="24.50" font-weight="bold" fill="#ffffff">Paragem</text>
<text transform="translate(562.20,390.60) scale(1.070,1)" text-anchor="middle" font-size="25.50" font-weight="bold" fill="#ffffff">ILUMINAÇÃO</text>
<text transform="translate(29.60,695.00) scale(0.945,1)" font-size="29.30" font-weight="normal" fill="#3a1010">Velocidade</text>
<text transform="translate(498.10,804.60) scale(0.945,1)" font-size="29.30" font-weight="normal" fill="#3a1010">Velocidade</text>
<text transform="translate(769.20,804.60) scale(0.945,1)" font-size="29.30" font-weight="normal" fill="#3a1010">Velocidade</text>
<text transform="translate(244.41,895.30) scale(0.935,1)" font-size="29.30" font-weight="normal" fill="#3a1010">Nivel Água</text>
<text transform="translate(97.20,753.60) scale(1.090,1)" text-anchor="middle" font-size="25.80" font-weight="bold" fill="#1c2640">0000 rpm</text>
<text transform="translate(564.10,863.40) scale(1.090,1)" text-anchor="middle" font-size="25.80" font-weight="bold" fill="#1c2640">0000 rpm</text>
<text transform="translate(835.80,863.40) scale(1.090,1)" text-anchor="middle" font-size="25.80" font-weight="bold" fill="#1c2640">0000 rpm</text>
<text transform="translate(43.04,1127.80) scale(1.020,1)" font-size="24.80" font-weight="bold" fill="#ffffff">Marcha</text>
<text transform="translate(58.20,1156.00) scale(1.040,1)" font-size="24.80" font-weight="bold" fill="#ffffff">Auto</text>
<text transform="translate(280.00,1141.70) scale(1.064,1)" text-anchor="middle" font-size="25.00" font-weight="bold" fill="#242c4a">Limpeza</text>
<text transform="translate(472.45,1141.70) scale(1.058,1)" text-anchor="middle" font-size="25.00" font-weight="bold" fill="#242c4a">Cabina 1</text>
<text transform="translate(665.45,1141.70) scale(1.078,1)" text-anchor="middle" font-size="25.00" font-weight="bold" fill="#242c4a">Forno</text>
<text transform="translate(858.05,1141.70) scale(1.071,1)" text-anchor="middle" font-size="25.00" font-weight="bold" fill="#242c4a">Arrefecedor</text>
<text transform="translate(1048.60,1141.70) scale(1.066,1)" text-anchor="middle" font-size="25.00" font-weight="bold" fill="#242c4a">Climatização</text>
<text transform="translate(1241.15,1141.70) scale(1.132,1)" text-anchor="middle" font-size="25.00" font-weight="bold" fill="#242c4a">Interfaces</text>
<text transform="translate(1434.00,1141.70) scale(1.060,1)" text-anchor="middle" font-size="25.00" font-weight="bold" fill="#242c4a">Gráficos</text>
<text transform="translate(1625.85,1141.70) scale(1.074,1)" text-anchor="middle" font-size="25.00" font-weight="bold" fill="#242c4a">Alarmes</text>
<text transform="translate(1817.85,1141.70) scale(1.089,1)" text-anchor="middle" font-size="25.00" font-weight="bold" fill="#242c4a">SAIR</text>
<text transform="translate(342.76,973.30) scale(1.086,1)" font-size="25.50" font-weight="bold" fill="#ececec">No.</text>
<text transform="translate(457.53,973.30) scale(1.047,1)" font-size="25.50" font-weight="bold" fill="#ececec">Time</text>
<text transform="translate(616.18,973.30) scale(1.131,1)" font-size="25.50" font-weight="bold" fill="#ececec">Date</text>
<text transform="translate(763.61,973.30) scale(1.122,1)" font-size="25.50" font-weight="bold" fill="#ececec">Text</text>
<text transform="translate(24.04,1061.40) scale(1.223,1)" font-size="18.50" font-weight="bold" fill="#444444">12/31/2000 10:59:39 AM</text>
<text transform="translate(1018.59,842.00) scale(1.060,1)" font-size="19.00" font-weight="normal" fill="#f2f2f2">9:59:39 AM</text>
<text transform="translate(1174.39,842.00) scale(1.057,1)" font-size="19.00" font-weight="normal" fill="#f2f2f2">10:14:39 AM</text>
<text transform="translate(1386.20,842.00) scale(1.051,1)" font-size="19.00" font-weight="normal" fill="#f2f2f2">10:29:39 AM</text>
<text transform="translate(1596.88,842.00) scale(1.067,1)" font-size="19.00" font-weight="normal" fill="#f2f2f2">10:44:39 AM</text>
<text transform="translate(1752.88,842.00) scale(1.067,1)" font-size="19.00" font-weight="normal" fill="#f2f2f2">10:59:39 AM</text>
<text transform="translate(1018.71,865.30) scale(1.045,1)" font-size="19.00" font-weight="normal" fill="#f2f2f2">12/31/2000</text>
<text transform="translate(1180.72,865.30) scale(1.041,1)" font-size="19.00" font-weight="normal" fill="#f2f2f2">12/31/2000</text>
<text transform="translate(1392.22,865.30) scale(1.042,1)" font-size="19.00" font-weight="normal" fill="#f2f2f2">12/31/2000</text>
<text transform="translate(1603.01,865.30) scale(1.048,1)" font-size="19.00" font-weight="normal" fill="#f2f2f2">12/31/2000</text>
<text transform="translate(1759.01,865.30) scale(1.048,1)" font-size="19.00" font-weight="normal" fill="#f2f2f2">12/31/2000</text>
<text transform="translate(1007.5,34.9) scale(1.05,1)" text-anchor="end" font-size="17.8" fill="#f2f2f2">50</text>
<text transform="translate(1007.5,186.2) scale(1.05,1)" text-anchor="end" font-size="17.8" fill="#f2f2f2">40</text>
<text transform="translate(1007.5,345.2) scale(1.05,1)" text-anchor="end" font-size="17.8" fill="#f2f2f2">30</text>
<text transform="translate(1007.5,501.4) scale(1.05,1)" text-anchor="end" font-size="17.8" fill="#f2f2f2">20</text>
<text transform="translate(1007.5,660) scale(1.05,1)" text-anchor="end" font-size="17.8" fill="#f2f2f2">10</text>
<text transform="translate(1007.5,813) scale(1.05,1)" text-anchor="end" font-size="17.8" fill="#f2f2f2">0</text>
<text transform="translate(1008,64.8) scale(1.02,1)" text-anchor="end" font-size="23.2" fill="#f2f2f2">°C</text>
<text transform="translate(1874.3,35) scale(1.05,1)" font-size="17.8" fill="#f2f2f2">100</text>
<text transform="translate(1874.3,186.2) scale(1.05,1)" font-size="17.8" fill="#f2f2f2">80</text>
<text transform="translate(1874.3,345.2) scale(1.05,1)" font-size="17.8" fill="#f2f2f2">60</text>
<text transform="translate(1874.3,501.4) scale(1.05,1)" font-size="17.8" fill="#f2f2f2">40</text>
<text transform="translate(1874.3,660.2) scale(1.05,1)" font-size="17.8" fill="#f2f2f2">20</text>
<text transform="translate(1874.3,813) scale(1.05,1)" font-size="17.8" fill="#f2f2f2">0</text>
<text transform="translate(1874.3,65) scale(0.95,1)" font-size="23" fill="#f2f2f2">HR</text>
<text transform="translate(1534.52,900.00) scale(0.980,1)" font-size="24.30" font-weight="normal" fill="#e81c1c">Temp.</text>
<text transform="translate(1627.06,900.00) scale(0.975,1)" font-size="24.30" font-weight="normal" fill="#e81c1c">00.0 ºC</text>
<text transform="translate(1729.09,900.00) scale(0.980,1)" font-size="24.30" font-weight="normal" fill="#22d022">Hum.</text>
<text transform="translate(1817.05,900.00) scale(0.980,1)" font-size="24.30" font-weight="normal" fill="#22d022">000 %</text>
<text transform="translate(1.5,1025.6) scale(1.55,1)" font-size="32" letter-spacing="2.6" fill="#e4e4e4">Automação</text>
</svg>
</body></html>
